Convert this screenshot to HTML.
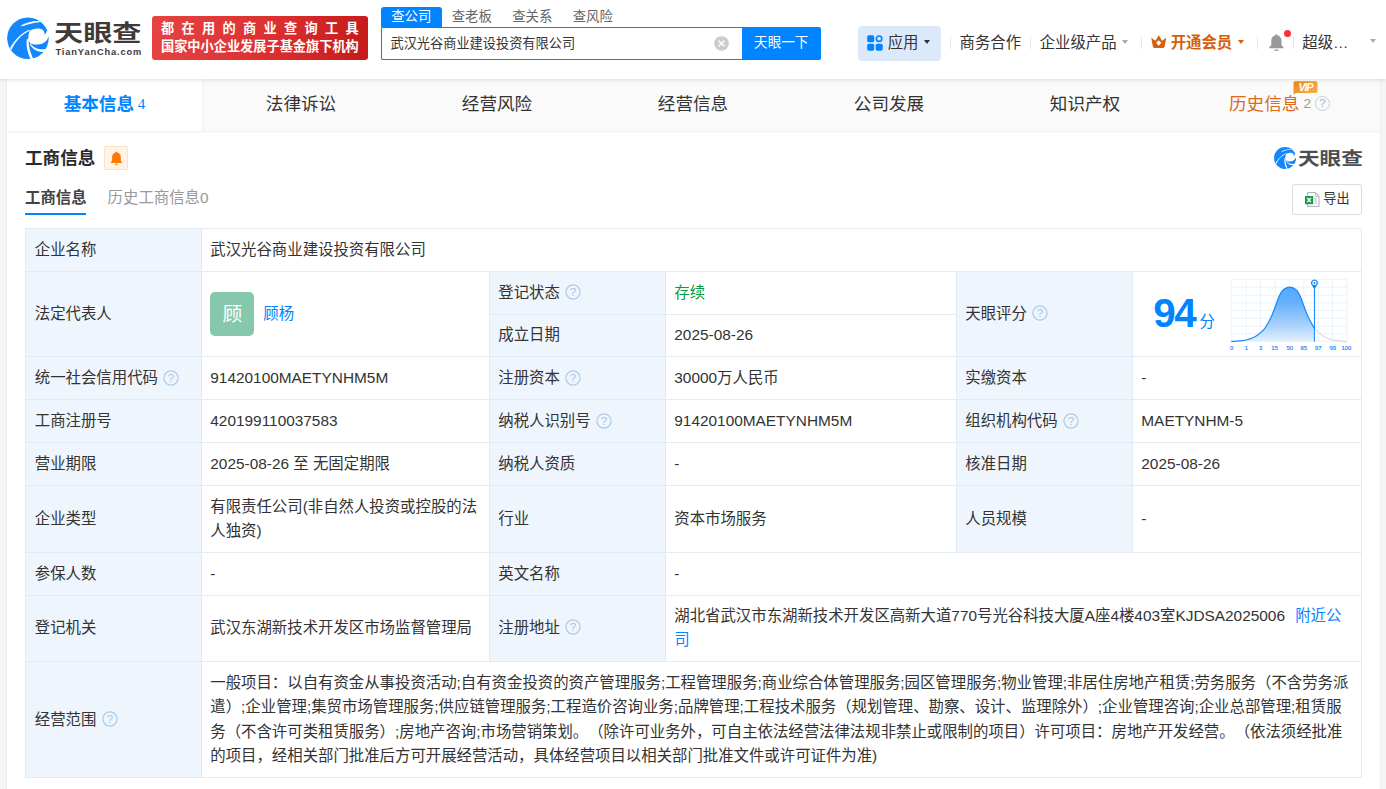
<!DOCTYPE html>
<html lang="zh-CN">
<head>
<meta charset="utf-8">
<title>武汉光谷商业建设投资有限公司 - 天眼查</title>
<style>
*{box-sizing:border-box;margin:0;padding:0}
html,body{width:1386px;height:789px;overflow:hidden}
body{background:#f5f5f5;font-family:"Liberation Sans","Noto Sans CJK SC",sans-serif;color:#333;font-size:15.4px;position:relative;text-spacing-trim:space-all}
.abs{position:absolute}
/* header */
#hd{position:absolute;left:0;top:0;width:1386px;height:79px;background:#fff;box-shadow:0 1px 4px rgba(0,0,0,.12);z-index:5}
#logo-t{position:absolute;left:54px;top:14px;font-size:22.6px;font-weight:700;color:#3f3a39;letter-spacing:0;line-height:40px;white-space:nowrap;transform:scaleX(1.29);transform-origin:0 0}
#logo-s{position:absolute;left:55.5px;top:46px;font-size:9.3px;font-weight:700;color:#3f3a39;letter-spacing:0.85px;line-height:12px;white-space:nowrap}
#banner{position:absolute;left:152px;top:16px;width:216px;height:44px;border-radius:3px;background:linear-gradient(100deg,#e64343 0%,#dc3030 55%,#c41a1a 100%);color:#fff;font-weight:700;white-space:nowrap}
#banner div{position:absolute;left:9px;line-height:18px}
#stabs{position:absolute;left:381px;top:7px;height:20px;font-size:13.4px;line-height:19px;color:#666;white-space:nowrap}
#stabs span{position:absolute;top:0;height:20px;width:60.5px;text-align:center}
#sbox{position:absolute;left:381px;top:27px;width:362px;height:33px;border:1px solid #0084ff;border-right:0;border-radius:2px 0 0 2px;background:#fff;font-size:13.2px;line-height:31px;padding-left:8.5px;color:#333;white-space:nowrap}
#sbtn{position:absolute;left:742px;top:27px;width:78.5px;height:33px;background:#0084ff;color:#fff;font-size:13.6px;line-height:32px;text-align:center;border-radius:0 2px 2px 0}
#app{position:absolute;left:858px;top:26px;width:83px;height:34.5px;background:#dce9fb;border-radius:4px}
.nv{position:absolute;top:32.8px;line-height:20px;font-size:15.4px;color:#333;white-space:nowrap}
.sep{position:absolute;top:36.5px;width:1px;height:12.5px;background:#e6e6e6}
.car{position:absolute;width:0;height:0;border-left:3.7px solid transparent;border-right:3.7px solid transparent;border-top:4.1px solid #999}
/* nav */
#nav{position:absolute;left:7px;top:79px;width:1373px;height:54px;background:#fafafa;border-bottom:1px solid #f9f9f9;box-shadow:inset 0 -1px 0 #f3f3f3}
#nav .t{position:absolute;top:0;height:52px;width:196px;text-align:center;font-size:17.6px;line-height:50px;color:#333;white-space:nowrap}
#nav .t.on{background:#fff;color:#0084ff;font-weight:700;border-right:1px solid #f0f0f0}
#card{position:absolute;left:7px;top:133px;width:1373px;height:656px;background:#fff}
#edge{position:absolute;left:6px;top:79px;width:1375px;height:710px;border-left:1px solid #ececec;border-right:1px solid #efefef}
/* table */
#tb{position:absolute;left:25px;top:228px;width:1336px;border-collapse:collapse;table-layout:fixed;font-size:15.4px;line-height:24.2px;color:#333}
#tb td{border:1px solid #e1ebf5;padding:8.4px 8.8px 8.8px 8.8px;vertical-align:middle;word-break:break-all}
#tb td.l{background:#eff5fd}
.q{display:inline-block;vertical-align:middle;margin-left:5.5px;position:relative;top:-1.5px}
#tb tr.r66 td{padding-top:7.4px;padding-bottom:9px}
a{color:#0084ff;text-decoration:none}
</style>
</head>
<body>
<div id="hd">
  <svg class="abs" style="left:0;top:10px" width="60" height="60" viewBox="0 0 789 789">
    <circle cx="367" cy="372" r="273" fill="#1488fa"/>
    <g fill="#fff">
      <path d="M392 272 C450 240 520 232 560 260 C585 280 590 305 585 328 C598 315 608 300 609 278 L660 275 L660 345 L638 352 C625 400 585 440 520 452 C470 458 430 452 402 440 C385 420 372 395 372 375 C372 340 380 300 392 272 Z"/>
      <path d="M398 268 C290 310 200 410 148 528 L132 500 C190 400 280 300 380 262 Z"/>
      <path d="M378 372 C372 460 395 560 436 640 L404 646 C360 560 340 460 352 390 Z"/>
      <path d="M398 436 C440 500 520 530 605 512 L578 552 C500 555 430 520 392 450 Z"/>
      <path d="M270 208 C340 168 430 142 526 146 L518 161 C440 167 360 189 292 215 Z"/>
    </g>
  </svg>
  <div id="logo-t">天眼查</div>
  <div id="logo-s">TianYanCha.com</div>
  <div id="banner">
    <div style="top:3.5px;font-size:13.2px;letter-spacing:7.3px">都在用的商业查询工具</div>
    <div style="top:21.5px;font-size:13.2px;letter-spacing:0">国家中小企业发展子基金旗下机构</div>
  </div>
  <div id="stabs">
    <span style="left:0;background:#0084ff;color:#fff;border-radius:3px 3px 0 0">查公司</span>
    <span style="left:60.5px">查老板</span>
    <span style="left:121px">查关系</span>
    <span style="left:181.5px">查风险</span>
  </div>
  <div id="sbox">武汉光谷商业建设投资有限公司<svg class="abs" style="left:331.5px;top:8px" width="15" height="15" viewBox="0 0 15 15"><circle cx="7.5" cy="7.5" r="7.3" fill="#ccc"/><path d="M4.9 4.9 L10.1 10.1 M10.1 4.9 L4.9 10.1" stroke="#fff" stroke-width="1.4" stroke-linecap="round"/></svg></div>
  <div id="sbtn">天眼一下</div>
  <div id="app"></div>
  <svg class="abs" style="left:867px;top:35px" width="16" height="16" viewBox="0 0 16 16">
    <rect x="0.2" y="0.2" width="7" height="7" rx="1.6" fill="#0084ff"/>
    <rect x="0.2" y="8.7" width="7" height="7" rx="1.6" fill="#0084ff"/>
    <rect x="8.7" y="8.7" width="7" height="7" rx="1.6" fill="#0084ff"/>
    <circle cx="12.1" cy="3.7" r="2.7" fill="none" stroke="#0084ff" stroke-width="1.7"/>
  </svg>
  <div class="nv" style="left:887.7px">应用</div>
  <div class="car" style="left:924.2px;top:40px;border-top-color:#333"></div>
  <div class="sep" style="left:950px"></div>
  <div class="nv" style="left:959.5px">商务合作</div>
  <div class="sep" style="left:1030px"></div>
  <div class="nv" style="left:1039.7px">企业级产品</div>
  <div class="car" style="left:1122.4px;top:40px;border-top-color:#aaa"></div>
  <div class="sep" style="left:1141px"></div>
  <svg class="abs" style="left:1151px;top:35.3px" width="15.5" height="13.4" viewBox="0 0 15 13">
    <path d="M0.2 2.6 L4.3 5.6 L7.5 0.3 L10.7 5.6 L14.8 2.6 L13.2 11.2 Q13 12.6 11.6 12.6 L3.4 12.6 Q2 12.6 1.8 11.2 Z" fill="#d65f0a"/>
    <path d="M7.5 5.2 L10 7.6 L7.5 10.4 L5 7.6 Z" fill="#fff"/>
  </svg>
  <div class="nv" style="left:1170.7px;color:#d65f0a;font-weight:700">开通会员</div>
  <div class="car" style="left:1238px;top:40px;border-top-color:#d65f0a"></div>
  <div class="sep" style="left:1257px"></div>
  <svg class="abs" style="left:1268px;top:33px" width="17" height="19" viewBox="0 0 17 19">
    <path d="M8.4 1.2 C9.1 1.2 9.5 1.7 9.5 2.3 C12 2.9 13.5 5 13.5 7.8 L13.5 12 L15.6 14.6 L15.6 15.3 L1.2 15.3 L1.2 14.6 L3.3 12 L3.3 7.8 C3.3 5 4.8 2.9 7.3 2.3 C7.3 1.7 7.7 1.2 8.4 1.2 Z" fill="#999"/>
    <rect x="6.2" y="16.6" width="4.4" height="1.2" rx="0.6" fill="#999"/>
  </svg>
  <div class="abs" style="left:1284px;top:30px;width:7.2px;height:7.2px;border-radius:50%;background:#ff2d3c"></div>
  <div class="sep" style="left:1293px"></div>
  <div class="nv" style="left:1302.3px">超级…</div>
  <div class="car" style="left:1369.6px;top:39.3px;border-top-color:#aaa"></div>
</div>

<div id="edge"></div>
<div id="nav">
  <div class="t on" style="left:0">基本信息<span style="font-family:'Liberation Serif',serif;font-weight:400;font-size:15px;position:relative;top:-1px"> 4</span></div>
  <div class="t" style="left:196px">法律诉讼</div>
  <div class="t" style="left:392px">经营风险</div>
  <div class="t" style="left:588px">经营信息</div>
  <div class="t" style="left:784px">公司发展</div>
  <div class="t" style="left:980px">知识产权</div>
  <div class="t" style="left:1222px;width:auto;text-align:left;color:#dc6a1e">历史信息</div>
  <div class="abs" style="left:1296.5px;top:0;font-size:13.6px;line-height:50px;color:#999">2</div>
  <div class="abs" style="left:1307.8px;top:16.5px;width:15.4px;height:15.4px;border:1.5px solid #c5cfd8;border-radius:50%;font-size:11.5px;line-height:12.4px;text-align:center;color:#a9b4bf">?</div>
  <svg class="abs" style="left:1285.5px;top:2px" width="25" height="14" viewBox="0 0 25 14">
    <defs><linearGradient id="vg" x1="0" y1="0" x2="1" y2="1"><stop offset="0" stop-color="#ef8414"/><stop offset="1" stop-color="#f7b250"/></linearGradient></defs>
    <path d="M2.3 0.2 L22.7 0.2 Q24.5 0.2 24.5 2 L24.5 10.2 Q24.5 12 22.7 12 L3 12 L0.5 13.6 L0.5 2 Q0.5 0.2 2.3 0.2 Z" fill="url(#vg)"/>
    <text x="12.6" y="10" font-family="Liberation Sans, sans-serif" font-size="10.5" font-weight="700" font-style="italic" fill="#fff" text-anchor="middle" letter-spacing="-0.9">VIP</text>
  </svg>
</div>

<div id="card"></div>

<div class="abs" style="left:25px;top:144.8px;font-size:17.6px;font-weight:700;line-height:26px;color:#2a2a2a">工商信息</div>
<div class="abs" style="left:104px;top:146px;width:24px;height:24px;background:#fff3e6;border:1px solid #ffe2c4;border-radius:2px"></div>
<svg class="abs" style="left:109.7px;top:150.5px" width="12.9" height="15" viewBox="0 0 12 14">
  <path d="M6 0.6 C6.6 0.6 7 1 7 1.5 C9 2 10.1 3.7 10.1 5.8 L10.1 9 L11.2 10.6 L11.2 11.2 L0.8 11.2 L0.8 10.6 L1.9 9 L1.9 5.8 C1.9 3.7 3 2 5 1.5 C5 1 5.4 0.6 6 0.6 Z" fill="#ff7a00"/>
  <path d="M4.6 12 L7.4 12 Q7.2 13.2 6 13.2 Q4.8 13.2 4.6 12 Z" fill="#ff7a00"/>
</svg>

<div class="abs" style="left:25px;top:187px;font-size:15.4px;font-weight:700;line-height:22px;color:#444">工商信息</div>
<div class="abs" style="left:25px;top:213px;width:61px;height:2px;background:#0084ff"></div>
<div class="abs" style="left:107.6px;top:187px;font-size:15.4px;line-height:22px;color:#999">历史工商信息0</div>

<div class="abs" style="left:1292px;top:184px;width:70px;height:31px;border:1px solid #d9dce1;border-radius:3px;background:#fff;font-size:13.2px;line-height:28px;padding-left:30.3px;color:#333">导出</div>
<svg class="abs" style="left:1304px;top:191px" width="17" height="17" viewBox="0 0 17 17">
  <path d="M3.6 1.6 L11.6 1.6 L15 5 L15 15.4 L3.6 15.4 Z" fill="#fff" stroke="#9aa5b1" stroke-width="0.9" stroke-linejoin="round"/>
  <path d="M11.4 1.8 L11.4 5.2 L14.8 5.2" fill="none" stroke="#9aa5b1" stroke-width="0.8"/>
  <path d="M10.6 7.3 H13.2 M10.6 9 H13.2 M10.6 10.7 H13.2 M10.6 12.4 H13.2" stroke="#b4bcc6" stroke-width="0.8"/>
  <rect x="1" y="5" width="8.2" height="8.2" fill="#1a9c48"/>
  <path d="M3.3 7 L6.9 11.2 M6.9 7 L3.3 11.2" stroke="#fff" stroke-width="1.3"/>
</svg>
<svg class="abs" style="left:1273.7px;top:147.1px" width="22.2" height="22.2" viewBox="94 99 548 548">
  <circle cx="367" cy="372" r="273" fill="#1488fa"/>
  <g fill="#fff">
    <path d="M392 272 C450 240 520 232 560 260 C585 280 590 305 585 328 C598 315 608 300 609 278 L660 275 L660 345 L638 352 C625 400 585 440 520 452 C470 458 430 452 402 440 C385 420 372 395 372 375 C372 340 380 300 392 272 Z"/>
    <path d="M398 268 C290 310 200 410 148 528 L132 500 C190 400 280 300 380 262 Z"/>
    <path d="M378 372 C372 460 395 560 436 640 L404 646 C360 560 340 460 352 390 Z"/>
    <path d="M398 436 C440 500 520 530 605 512 L578 552 C500 555 430 520 392 450 Z"/>
    <path d="M270 208 C340 168 430 142 526 146 L518 161 C440 167 360 189 292 215 Z"/>
  </g>
</svg>
<div class="abs" style="left:1297.6px;top:147.2px;font-size:18px;font-weight:700;line-height:24px;color:#4b4e53;white-space:nowrap;transform:scaleX(1.2);transform-origin:0 0">天眼查</div>

<table id="tb">
<colgroup><col style="width:175.5px"><col style="width:288px"><col style="width:176px"><col style="width:291px"><col style="width:176px"><col style="width:229.5px"></colgroup>
<tr style="height:43px"><td class="l">企业名称</td><td colspan="5">武汉光谷商业建设投资有限公司</td></tr>
<tr style="height:43px"><td class="l" rowspan="2">法定代表人</td><td rowspan="2"><span style="display:inline-block;width:44px;height:44px;background:#86c8ae;border-radius:5px;color:#fff;font-size:19.8px;line-height:44px;text-align:center;vertical-align:middle">顾</span><a style="margin-left:9px;vertical-align:middle">顾杨</a></td><td class="l">登记状态<svg class="q" width="16" height="16" viewBox="0 0 16 16"><circle cx="8" cy="8" r="7.1" fill="none" stroke="#aecbe6" stroke-width="1.2"/><text x="8" y="12" text-anchor="middle" font-family="Liberation Sans, sans-serif" font-size="11.5" fill="#a5c4e2">?</text></svg></td><td style="color:#089944">存续</td><td class="l" rowspan="2">天眼评分<svg class="q" width="16" height="16" viewBox="0 0 16 16"><circle cx="8" cy="8" r="7.1" fill="none" stroke="#aecbe6" stroke-width="1.2"/><text x="8" y="12" text-anchor="middle" font-family="Liberation Sans, sans-serif" font-size="11.5" fill="#a5c4e2">?</text></svg></td><td rowspan="2"></td></tr>
<tr style="height:42px"><td class="l">成立日期</td><td>2025-08-26</td></tr>
<tr style="height:43px"><td class="l">统一社会信用代码<svg class="q" width="16" height="16" viewBox="0 0 16 16"><circle cx="8" cy="8" r="7.1" fill="none" stroke="#aecbe6" stroke-width="1.2"/><text x="8" y="12" text-anchor="middle" font-family="Liberation Sans, sans-serif" font-size="11.5" fill="#a5c4e2">?</text></svg></td><td>91420100MAETYNHM5M</td><td class="l">注册资本<svg class="q" width="16" height="16" viewBox="0 0 16 16"><circle cx="8" cy="8" r="7.1" fill="none" stroke="#aecbe6" stroke-width="1.2"/><text x="8" y="12" text-anchor="middle" font-family="Liberation Sans, sans-serif" font-size="11.5" fill="#a5c4e2">?</text></svg></td><td>30000万人民币</td><td class="l">实缴资本</td><td>-</td></tr>
<tr style="height:43px"><td class="l">工商注册号</td><td>420199110037583</td><td class="l">纳税人识别号<svg class="q" width="16" height="16" viewBox="0 0 16 16"><circle cx="8" cy="8" r="7.1" fill="none" stroke="#aecbe6" stroke-width="1.2"/><text x="8" y="12" text-anchor="middle" font-family="Liberation Sans, sans-serif" font-size="11.5" fill="#a5c4e2">?</text></svg></td><td>91420100MAETYNHM5M</td><td class="l">组织机构代码<svg class="q" width="16" height="16" viewBox="0 0 16 16"><circle cx="8" cy="8" r="7.1" fill="none" stroke="#aecbe6" stroke-width="1.2"/><text x="8" y="12" text-anchor="middle" font-family="Liberation Sans, sans-serif" font-size="11.5" fill="#a5c4e2">?</text></svg></td><td>MAETYNHM-5</td></tr>
<tr style="height:43px"><td class="l">营业期限</td><td>2025-08-26 至 无固定期限</td><td class="l">纳税人资质</td><td>-</td><td class="l">核准日期</td><td>2025-08-26</td></tr>
<tr style="height:67px"><td class="l">企业类型</td><td>有限责任公司(非自然人投资或控股的法人独资)</td><td class="l">行业</td><td>资本市场服务</td><td class="l">人员规模</td><td>-</td></tr>
<tr style="height:43px"><td class="l">参保人数</td><td>-</td><td class="l">英文名称</td><td colspan="3">-</td></tr>
<tr style="height:66px" class="r66"><td class="l">登记机关</td><td>武汉东湖新技术开发区市场监督管理局</td><td class="l">注册地址<svg class="q" width="16" height="16" viewBox="0 0 16 16"><circle cx="8" cy="8" r="7.1" fill="none" stroke="#aecbe6" stroke-width="1.2"/><text x="8" y="12" text-anchor="middle" font-family="Liberation Sans, sans-serif" font-size="11.5" fill="#a5c4e2">?</text></svg></td><td colspan="3">湖北省武汉市东湖新技术开发区高新大道770号光谷科技大厦A座4楼403室KJDSA2025006 <a style="margin-left:6px">附近公司</a></td></tr>
<tr style="height:116px"><td class="l">经营范围<svg class="q" width="16" height="16" viewBox="0 0 16 16"><circle cx="8" cy="8" r="7.1" fill="none" stroke="#aecbe6" stroke-width="1.2"/><text x="8" y="12" text-anchor="middle" font-family="Liberation Sans, sans-serif" font-size="11.5" fill="#a5c4e2">?</text></svg></td><td colspan="5" style="white-space:nowrap">一般项目：以自有资金从事投资活动;自有资金投资的资产管理服务;工程管理服务;商业综合体管理服务;园区管理服务;物业管理;非居住房地产租赁;劳务服务（不含劳务派<br>遣）;企业管理;集贸市场管理服务;供应链管理服务;工程造价咨询业务;品牌管理;工程技术服务（规划管理、勘察、设计、监理除外）;企业管理咨询;企业总部管理;租赁服<br>务（不含许可类租赁服务）;房地产咨询;市场营销策划。（除许可业务外，可自主依法经营法律法规非禁止或限制的项目）许可项目：房地产开发经营。（依法须经批准<br>的项目，经相关部门批准后方可开展经营活动，具体经营项目以相关部门批准文件或许可证件为准)</td></tr>
</table>
<div class="abs" style="left:1153.3px;top:290.6px;font-size:40.4px;font-weight:700;line-height:44px;color:#0084ff;font-family:'Liberation Sans',sans-serif;letter-spacing:-1.6px">94</div>
<div class="abs" style="left:1199.5px;top:311px;font-size:15.4px;line-height:22px;color:#0084ff">分</div>
<svg class="abs" style="left:1136px;top:272px" width="230" height="86" viewBox="0 0 230 86">
<defs><linearGradient id="cg" x1="0" y1="0" x2="0" y2="1"><stop offset="0" stop-color="#55a8fd"/><stop offset="0.3" stop-color="#68b1fc"/><stop offset="0.7" stop-color="#a9d1fc"/><stop offset="1" stop-color="#e3f0fd"/></linearGradient></defs>
<path d="M95.27 7.58 V69.43 M110.28 7.58 V69.43 M124.48 7.58 V69.43 M139.38 7.58 V69.43 M153.68 7.58 V69.43 M167.87 7.58 V69.43 M182.27 7.58 V69.43 M196.47 7.58 V69.43 M210.87 7.58 V69.43 M95.27 7.58 H210.87 M95.27 15.18 H210.87 M95.27 23.29 H210.87 M95.27 30.90 H210.87 M95.27 38.50 H210.87 M95.27 46.31 H210.87 M95.27 54.22 H210.87 M95.27 61.83 H210.87 M95.27 69.43 H210.87" stroke="#e2eefb" stroke-width="0.7" fill="none"/>
<polygon points="95.27,69.43 96.08,69.41 96.90,69.38 97.71,69.34 98.52,69.29 99.33,69.24 100.14,69.18 100.95,69.11 101.76,69.04 102.57,68.97 103.38,68.90 104.20,68.82 105.01,68.73 105.82,68.62 106.63,68.51 107.44,68.39 108.25,68.25 109.06,68.11 109.87,67.95 110.69,67.78 111.50,67.59 112.31,67.38 113.12,67.14 113.93,66.87 114.74,66.58 115.55,66.27 116.36,65.94 117.18,65.59 117.99,65.22 118.80,64.80 119.61,64.33 120.42,63.82 121.23,63.26 122.04,62.67 122.85,62.05 123.66,61.40 124.48,60.74 125.29,60.04 126.10,59.30 126.91,58.49 127.72,57.61 128.53,56.65 129.34,55.58 130.15,54.29 130.97,52.89 131.78,51.47 132.59,50.04 133.40,48.56 134.21,47.00 135.02,45.35 135.83,43.56 136.64,41.56 137.45,39.43 138.27,37.23 139.08,35.03 139.89,32.86 140.70,30.60 141.51,28.32 142.32,26.19 143.13,24.35 143.94,22.67 144.76,21.09 145.57,19.71 146.38,18.64 147.19,17.89 148.00,17.24 148.81,16.69 149.62,16.24 150.43,15.90 151.25,15.65 152.06,15.42 152.87,15.26 153.68,15.18 154.49,15.26 155.30,15.42 156.11,15.65 156.92,15.90 157.73,16.24 158.55,16.69 159.36,17.24 160.17,17.89 160.98,18.64 161.79,19.71 162.60,21.09 163.41,22.67 164.22,24.35 165.04,26.19 165.85,28.32 166.66,30.60 167.47,32.86 168.28,35.03 169.09,37.23 169.90,39.43 170.71,41.56 171.53,43.56 172.34,45.35 173.15,47.00 173.96,48.56 174.77,50.04 175.58,51.47 176.39,52.89 177.20,54.29 178.01,55.58 178.42,56.14 178.42,69.43 95.27,69.43" fill="url(#cg)"/>
<polyline points="178.42,56.14 179.23,57.14 180.04,58.06 180.85,58.90 181.66,59.68 182.48,60.39 183.29,61.07 184.10,61.73 184.91,62.37 185.72,62.97 186.53,63.54 187.34,64.08 188.15,64.57 188.97,65.02 189.78,65.41 190.59,65.77 191.40,66.11 192.21,66.43 193.02,66.73 193.83,67.01 194.64,67.26 195.46,67.49 196.27,67.69 197.08,67.87 197.89,68.03 198.70,68.18 199.51,68.32 200.32,68.45 201.13,68.57 201.94,68.68 202.76,68.77 203.57,68.86 204.38,68.94 205.19,69.01 206.00,69.08 206.81,69.15 207.62,69.21 208.43,69.27 209.25,69.32 210.06,69.36 210.87,69.40" fill="none" stroke="#b9c4d0" stroke-width="0.8"/>
<polyline points="95.27,69.43 96.08,69.41 96.90,69.38 97.71,69.34 98.52,69.29 99.33,69.24 100.14,69.18 100.95,69.11 101.76,69.04 102.57,68.97 103.38,68.90 104.20,68.82 105.01,68.73 105.82,68.62 106.63,68.51 107.44,68.39 108.25,68.25 109.06,68.11 109.87,67.95 110.69,67.78 111.50,67.59 112.31,67.38 113.12,67.14 113.93,66.87 114.74,66.58 115.55,66.27 116.36,65.94 117.18,65.59 117.99,65.22 118.80,64.80 119.61,64.33 120.42,63.82 121.23,63.26 122.04,62.67 122.85,62.05 123.66,61.40 124.48,60.74 125.29,60.04 126.10,59.30 126.91,58.49 127.72,57.61 128.53,56.65 129.34,55.58 130.15,54.29 130.97,52.89 131.78,51.47 132.59,50.04 133.40,48.56 134.21,47.00 135.02,45.35 135.83,43.56 136.64,41.56 137.45,39.43 138.27,37.23 139.08,35.03 139.89,32.86 140.70,30.60 141.51,28.32 142.32,26.19 143.13,24.35 143.94,22.67 144.76,21.09 145.57,19.71 146.38,18.64 147.19,17.89 148.00,17.24 148.81,16.69 149.62,16.24 150.43,15.90 151.25,15.65 152.06,15.42 152.87,15.26 153.68,15.18 154.49,15.26 155.30,15.42 156.11,15.65 156.92,15.90 157.73,16.24 158.55,16.69 159.36,17.24 160.17,17.89 160.98,18.64 161.79,19.71 162.60,21.09 163.41,22.67 164.22,24.35 165.04,26.19 165.85,28.32 166.66,30.60 167.47,32.86 168.28,35.03 169.09,37.23 169.90,39.43 170.71,41.56 171.53,43.56 172.34,45.35 173.15,47.00 173.96,48.56 174.77,50.04 175.58,51.47 176.39,52.89 177.20,54.29 178.01,55.58 178.42,56.14" fill="none" stroke="#0a86ff" stroke-width="1.15" stroke-linejoin="round"/>
<path d="M178.42 15.18 V69.73" stroke="#0a86ff" stroke-width="1"/>
<path d="M178.42 17.21 L175.72 13.12 A3.4 3.4 0 1 1 181.12 13.12 Z" fill="#0a86ff"/>
<circle cx="178.42" cy="10.92" r="2.2" fill="#fff"/>
<circle cx="178.42" cy="10.92" r="1.0" fill="#0a86ff"/>
<g font-family="Liberation Sans, sans-serif" font-size="5.9" fill="#0084ff" stroke="#0084ff" stroke-width="0.12" text-anchor="middle"><text x="95.58" y="77.54">0</text><text x="110.28" y="77.54">1</text><text x="124.68" y="77.54">3</text><text x="138.47" y="77.54">15</text><text x="153.68" y="77.54">50</text><text x="167.87" y="77.54">85</text><text x="182.27" y="77.54">97</text><text x="196.67" y="77.54">99</text><text x="210.46" y="77.54">100</text></g>
</svg>
</body>
</html>
